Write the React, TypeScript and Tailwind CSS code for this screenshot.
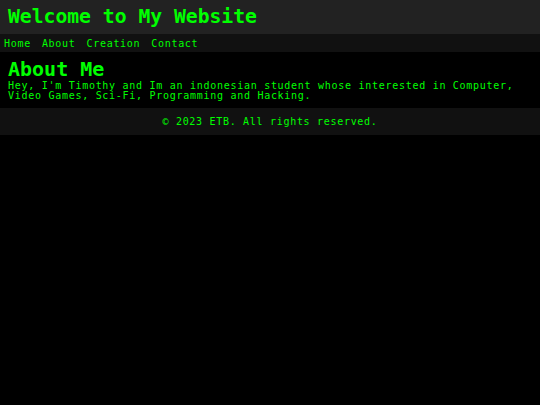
export default function App() {
    return (
        <div className="min-h-[405px] bg-black text-[#00ff00] font-['DejaVu_Sans_Mono',monospace]">
            <header className="bg-[#222222] h-[34px] flex items-center px-2">
                <h1 className="text-[19.7px] font-bold leading-none">Welcome to My Website</h1>
            </header>

            <nav className="bg-[#111111] h-[18px] flex items-center px-1 gap-[11px] text-[10px] tracking-[0.7px]">
                <a href="#">Home</a>
                <a href="#">About</a>
                <a href="#">Creation</a>
                <a href="#">Contact</a>
            </nav>

            <main className="px-2 pt-[7px] pb-[7px]">
                <h2 className="text-[20px] font-bold leading-[20px]">About Me</h2>
                <p className="text-[10px] tracking-[0.72px] leading-[10px] mt-[2px]">
                    Hey, I'm Timothy and Im an indonesian student whose interested in Computer, Video Games, Sci-Fi, Programming and Hacking.
                </p>
            </main>

            <footer className="bg-[#111111] h-[27px] flex items-center justify-center text-[10px] tracking-[0.7px]">
                © 2023 ETB. All rights reserved.
            </footer>
        </div>
    );
}
